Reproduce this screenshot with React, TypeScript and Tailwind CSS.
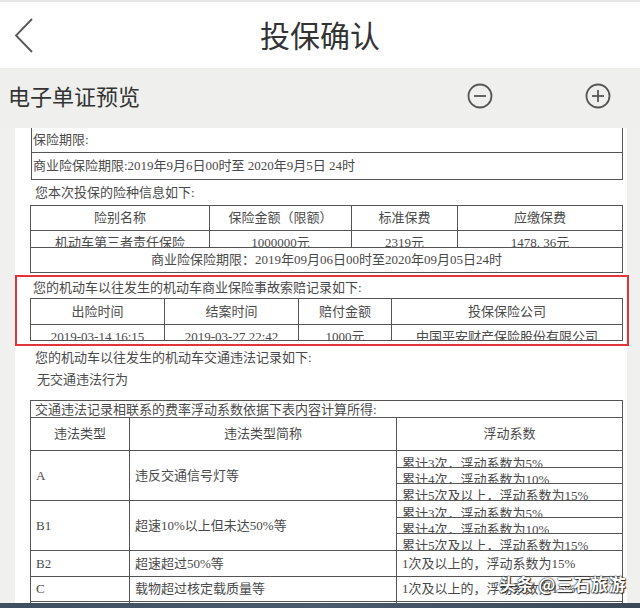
import React from "react";

const docFont = { fontFamily: '"Liberation Serif", "Noto Sans CJK SC", serif' };

// text that sits low in a short row and gets cut by the next rule, as in the scan
function Clipped({ children, h = 16, center = true }: { children: React.ReactNode; h?: number; center?: boolean }) {
    return (
        <div
            className={`overflow-hidden whitespace-nowrap leading-[13px] pt-[5px] ${center ? "text-center" : "pl-[5px]"}`}
            style={{ height: h }}
        >
            {children}
        </div>
    );
}

const cell = "border-[1.5px] border-[#555] p-0 align-middle";

function ToolIcon({ plus }: { plus?: boolean }) {
    return (
        <svg width="26" height="26" viewBox="0 0 26 26" fill="none" stroke="#555" strokeWidth="1.8">
            <circle cx="13" cy="13" r="11.5" />
            <line x1="7" y1="13" x2="19" y2="13" />
            {plus && <line x1="13" y1="7" x2="13" y2="19" />}
        </svg>
    );
}

export default function App() {
    const subA = ["累计3次，浮动系数为5%", "累计4次，浮动系数为10%", "累计5次及以上，浮动系数为15%"];

    return (
        <div
            className="relative w-[640px] h-[608px] overflow-hidden flex flex-col bg-[#f0f0ee]"
            style={{ fontFamily: '"Noto Sans CJK SC", "Noto Sans", sans-serif' }}
        >
            {/* Header */}
            <div className="h-[68px] shrink-0 bg-white border-t-2 border-[#e6e6e6] grid grid-cols-[80px_1fr_80px] items-center">
                <div className="pl-[15px] pt-[1px]">
                    <svg width="20" height="36" viewBox="0 0 20 36" fill="none" stroke="#555" strokeWidth="1.8">
                        <polyline points="17,1 1,17.5 17,34" />
                    </svg>
                </div>
                <div className="text-center text-[30px] text-[#333] leading-none pb-[2px]">投保确认</div>
                <div />
            </div>

            {/* Toolbar */}
            <div className="h-[60px] shrink-0 flex items-center pl-[8px] pr-[29px] pb-[5px] bg-[#efefed]">
                <span className="text-[22px] text-[#333]">电子单证预览</span>
                <div className="ml-auto flex items-center gap-[92px]">
                    <ToolIcon />
                    <ToolIcon plus />
                </div>
            </div>

            {/* Document preview */}
            <div className="flex-1 overflow-hidden">
                <div className="ml-[15px] w-[612px] h-full bg-white pl-[15px] pr-[4px] text-[13px] text-[#4a4a4a]" style={docFont}>
                    {/* period box */}
                    <div className="border-x-[1.5px] border-b-[1.5px] border-[#555] ml-[1px]">
                        <div className="h-[25px] flex items-center pl-[1px] border-b-[1.5px] border-[#555]">保险期限:</div>
                        <div className="h-[26px] flex items-center pl-[1px]">商业险保险期限:2019年9月6日00时至 2020年9月5日 24时</div>
                    </div>

                    <div className="h-[25px] flex items-center pl-[5px]">您本次投保的险种信息如下:</div>

                    <table className="w-full table-fixed border-collapse">
                        <colgroup>
                            <col style={{ width: 179 }} />
                            <col style={{ width: 142 }} />
                            <col style={{ width: 106 }} />
                            <col />
                        </colgroup>
                        <tbody>
                            <tr className="h-[25px] text-center">
                                <td className={cell}>险别名称</td>
                                <td className={cell}>保险金额（限额）</td>
                                <td className={cell}>标准保费</td>
                                <td className={cell}>应缴保费</td>
                            </tr>
                            <tr>
                                <td className={cell}><Clipped>机动车第三者责任保险</Clipped></td>
                                <td className={cell}><Clipped>1000000元</Clipped></td>
                                <td className={cell}><Clipped>2319元</Clipped></td>
                                <td className={cell}><Clipped>1478. 36元</Clipped></td>
                            </tr>
                            <tr className="h-[25px] text-center">
                                <td className={cell} colSpan={4}>商业险保险期限：2019年09月06日00时至2020年09月05日24时</td>
                            </tr>
                        </tbody>
                    </table>

                    {/* highlighted claims record */}
                    <div className="mt-[2px] -ml-[15px] -mr-[6px] border-2 border-[#e3343b] pl-[13px] pr-[4px] pb-[3px]">
                        <div className="h-[21px] flex items-center pl-[3px] pt-[1px]">您的机动车以往发生的机动车商业保险事故索赔记录如下:</div>
                        <table className="w-full table-fixed border-collapse">
                            <colgroup>
                                <col style={{ width: 134 }} />
                                <col style={{ width: 134 }} />
                                <col style={{ width: 93 }} />
                                <col />
                            </colgroup>
                            <tbody>
                                <tr className="h-[26px] text-center">
                                    <td className={cell}>出险时间</td>
                                    <td className={cell}>结案时间</td>
                                    <td className={cell}>赔付金额</td>
                                    <td className={cell}>投保保险公司</td>
                                </tr>
                                <tr>
                                    <td className={cell}><Clipped h={15}>2019-03-14 16:15</Clipped></td>
                                    <td className={cell}><Clipped h={15}>2019-03-27 22:42</Clipped></td>
                                    <td className={cell}><Clipped h={15}>1000元</Clipped></td>
                                    <td className={cell}><Clipped h={15}>中国平安财产保险股份有限公司</Clipped></td>
                                </tr>
                            </tbody>
                        </table>
                    </div>

                    <div className="h-[23px] flex items-center pl-[5px]">您的机动车以往发生的机动车交通违法记录如下:</div>
                    <div className="h-[22px] flex items-center pl-[7px] mb-[9px]">无交通违法行为</div>

                    {/* traffic violation coefficient table */}
                    <table className="w-full table-fixed border-collapse">
                        <colgroup>
                            <col style={{ width: 99 }} />
                            <col style={{ width: 267 }} />
                            <col />
                        </colgroup>
                        <tbody>
                            <tr className="h-[17px]">
                                <td className={cell} colSpan={3}>
                                    <div className="pl-[4px] leading-[15px]">交通违法记录相联系的费率浮动系数依据下表内容计算所得:</div>
                                </td>
                            </tr>
                            <tr className="h-[33px] text-center">
                                <td className={cell}>违法类型</td>
                                <td className={cell}>违法类型简称</td>
                                <td className={cell}>浮动系数</td>
                            </tr>
                            {["A", "B1"].map((k) => (
                                <tr key={k} className="h-[50px]">
                                    <td className={cell}><div className="pl-[5px]">{k}</div></td>
                                    <td className={cell}>
                                        <div className="pl-[5px]">{k === "A" ? "违反交通信号灯等" : "超速10%以上但未达50%等"}</div>
                                    </td>
                                    <td className={cell}>
                                        {subA.map((t, i) => (
                                            <div key={t} className={i < 2 ? "border-b-[1.5px] border-[#555]" : ""}>
                                                <Clipped h={i < 2 ? 15 : 16} center={false}>{t}</Clipped>
                                            </div>
                                        ))}
                                    </td>
                                </tr>
                            ))}
                            <tr className="h-[26px]">
                                <td className={cell}><div className="pl-[5px]">B2</div></td>
                                <td className={cell}><div className="pl-[5px]">超速超过50%等</div></td>
                                <td className={cell}><div className="pl-[5px]">1次及以上的，浮动系数为15%</div></td>
                            </tr>
                            <tr className="h-[25px]">
                                <td className={cell}><div className="pl-[5px]">C</div></td>
                                <td className={cell}><div className="pl-[5px]">载物超过核定载质量等</div></td>
                                <td className={cell}><div className="pl-[5px]">1次及以上的，浮动系数为15%</div></td>
                            </tr>
                            <tr className="h-[25px]">
                                <td className={cell}><div className="pl-[5px]">D</div></td>
                                <td className={cell} />
                                <td className={cell} />
                            </tr>
                        </tbody>
                    </table>
                </div>
            </div>

            <div className="h-[5px] shrink-0 bg-gradient-to-r from-[#3e4f62] via-[#4a5b6e] to-[#3a4858]" />

            {/* watermark */}
            <div className="absolute right-[14px] bottom-[12px] text-[17px] font-bold text-white tracking-[0.5px] [text-shadow:0_0_2px_#222,0_0_1px_#222,1px_1px_1px_#333]">
                头条 @三石旅游
            </div>
        </div>
    );
}
